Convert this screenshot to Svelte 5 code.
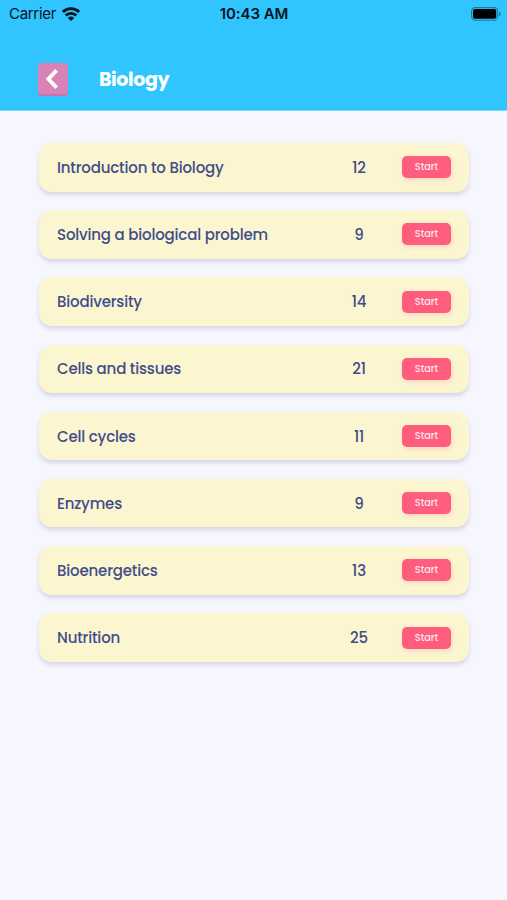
<script lang="ts">
    const time = '10:43 AM';
    const subject = 'Biology';

    const topics = [
        { name: 'Introduction to Biology', questions: 12 },
        { name: 'Solving a biological problem', questions: 9 },
        { name: 'Biodiversity', questions: 14 },
        { name: 'Cells and tissues', questions: 21 },
        { name: 'Cell cycles', questions: 11 },
        { name: 'Enzymes', questions: 9 },
        { name: 'Bioenergetics', questions: 13 },
        { name: 'Nutrition', questions: 25 }
    ];
</script>

<div class="screen">
    <header>
        <div class="status">
            <div class="carrier">
                <span>Carrier</span>
                <svg width="18" height="14" viewBox="0 0 18 14" fill="none" stroke="#06141c" stroke-width="2.8">
                    <path d="M0.9 4.9a11.5 11.5 0 0 1 16.2 0" />
                    <path d="M3.7 8.5a7.6 7.6 0 0 1 10.6 0" />
                    <path d="M9 14L5.9 10.9a4.4 4.4 0 0 1 6.2 0z" fill="#06141c" stroke="none" />
                </svg>
            </div>
            <span class="time">{time}</span>
            <svg class="battery" width="30" height="14" viewBox="0 0 30 14">
                <rect x="0.6" y="0.6" width="26" height="12.6" rx="3.6" fill="none" stroke="#197a9d" stroke-width="1.1" />
                <rect x="2" y="2" width="23.2" height="9.8" rx="2" fill="#000" />
                <path d="M28 4.8v4.4a2.3 2.3 0 0 0 0-4.4z" fill="#197a9d" />
            </svg>
        </div>

        <div class="title-bar">
            <button class="back" type="button" aria-label="Back">
                <svg width="14" height="22" viewBox="0 0 14 22">
                    <path d="M11.6 2.4L3.4 11l8.2 8.6" fill="none" stroke="#fff" stroke-width="3.9" />
                </svg>
            </button>
            <h1>{subject}</h1>
        </div>
    </header>

    <main>
        {#each topics as topic}
            <div class="topic">
                <span class="name">{topic.name}</span>
                <span class="count">{topic.questions}</span>
                <button class="start" type="button">Start</button>
            </div>
        {/each}
    </main>
</div>

<style>
    :global(body) {
        background: #f6f6ff;
    }

    .screen {
        min-height: 900px;
        font-family: Poppins, Inter, sans-serif;
        background: #f6f6ff;
    }

    header {
        box-sizing: border-box;
        height: 111px;
        background: #30c5ff;
        border-bottom: 1px solid #7dd9fc;
    }

    .status {
        display: grid;
        grid-template-columns: 1fr auto 1fr;
        align-items: center;
        height: 27px;
        padding: 0 6px 0 9px;
        font-family: Inter, sans-serif;
        font-size: 15px;
        color: #06141c;
    }

    .carrier {
        display: flex;
        align-items: center;
        gap: 6px;
    }

    .carrier span {
        letter-spacing: -0.3px;
    }

    .time {
        margin-right: 2px;
        font-weight: 600;
        letter-spacing: -0.05px;
    }

    .battery {
        justify-self: end;
    }

    .title-bar {
        display: flex;
        align-items: center;
        gap: 31px;
        padding: 36px 38px 0;
    }

    button {
        padding: 0;
        border: 0;
        font-family: inherit;
        cursor: pointer;
    }

    .back {
        display: flex;
        align-items: center;
        justify-content: center;
        box-sizing: border-box;
        width: 30px;
        height: 33px;
        padding-right: 3px;
        padding-bottom: 1px;
        border-radius: 4px;
        background: #d783b5;
        box-shadow: inset 0 -2px 0 #c573b2;
    }

    h1 {
        margin: 0;
        font-size: 19px;
        font-weight: 700;
        letter-spacing: -0.4px;
        line-height: 33px;
        color: #fff;
    }

    main {
        display: flex;
        flex-direction: column;
        gap: 18.7px;
        padding: 32px 38px 0 39px;
    }

    .topic {
        display: grid;
        grid-template-columns: 1fr 50px 49px;
        align-items: center;
        box-sizing: border-box;
        height: 48.5px;
        padding: 0 18px;
        column-gap: 18px;
        border-radius: 13px;
        background: #fbf5d0;
        box-shadow: 0 3px 4px rgba(60, 60, 110, 0.17);
        font-size: 15px;
        font-weight: 500;
        letter-spacing: -0.18px;
        color: #3f4e8a;
    }

    .count {
        text-align: center;
    }

    .start {
        height: 22px;
        border-radius: 5px;
        background: #ff5d7e;
        box-shadow: 1px 2px 5px rgba(255, 93, 126, 0.2);
        font-size: 9.7px;
        font-weight: 500;
        line-height: 22px;
        color: #ffe6ea;
    }
</style>
